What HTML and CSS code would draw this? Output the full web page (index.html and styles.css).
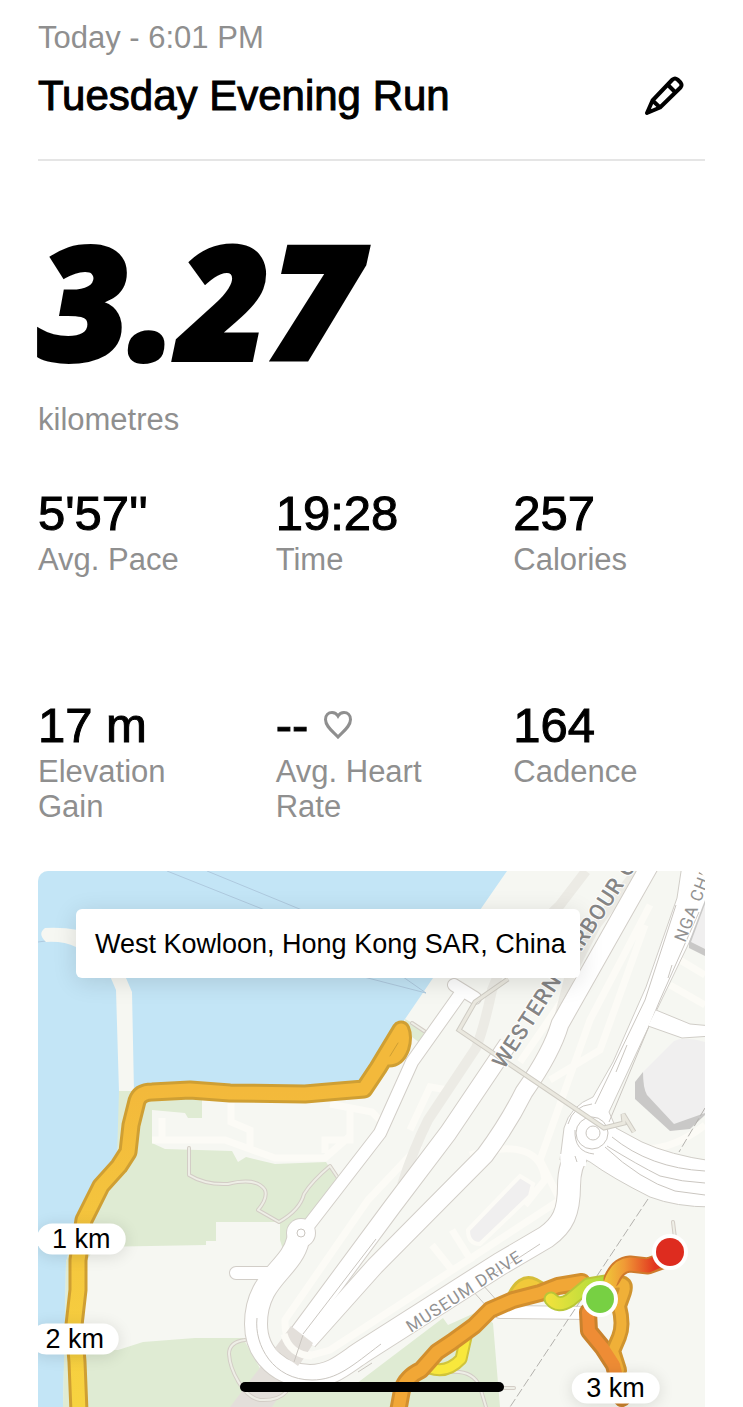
FILE: index.html
```html
<!DOCTYPE html>
<html lang="en">
<head>
    <meta charset="UTF-8">
    <meta name="viewport" content="width=device-width, initial-scale=1">
    <title>Tuesday Evening Run</title>
    <link rel="stylesheet" href="styles.css">
</head>
<body>
    <main class="run">
        <header class="run-header">
            <p class="date">Today - 6:01 PM</p>
            <div class="title-row">
                <h1>Tuesday Evening Run</h1>
                <button class="edit" type="button" aria-label="Edit name">
                    <svg viewBox="0 0 40 40" width="40" height="40">
                        <path d="M3 37 L8.500 24.500 L28.500 3.500 Q31 1.500 33.500 3.500 L36.500 6.500 Q38.500 9 36.500 11.500 L16 31.500 Z"/>
                        <path d="M23.500 8.500 L31.500 16.500 M8.500 24.500 L16 31.500 M5 33.500 L7 35.500"/>
                    </svg>
                </button>
            </div>
        </header>

        <section class="distance">
            <div class="distance-value">3.27</div>
            <div class="label">kilometres</div>
        </section>

        <section class="stats">
            <div class="stat">
                <div class="value">5'57''</div>
                <div class="label">Avg. Pace</div>
            </div>
            <div class="stat">
                <div class="value">19:28</div>
                <div class="label">Time</div>
            </div>
            <div class="stat">
                <div class="value">257</div>
                <div class="label">Calories</div>
            </div>
            <div class="stat">
                <div class="value">17 m</div>
                <div class="label">Elevation Gain</div>
            </div>
            <div class="stat">
                <div class="value">--
                    <svg class="heart" viewBox="0 0 28 28" width="28" height="28">
                        <path d="M14 26 C9 20.500 1.500 15.500 1.500 8.500 C1.500 4 4.500 1.500 8 1.500 C10.500 1.500 12.500 2.500 14 5 C15.500 2.500 17.500 1.500 20 1.500 C23.500 1.500 26.500 4 26.500 8.500 C26.500 15.500 19 20.500 14 26 Z"/>
                    </svg>
                </div>
                <div class="label">Avg. Heart Rate</div>
            </div>
            <div class="stat">
                <div class="value">164</div>
                <div class="label">Cadence</div>
            </div>
        </section>

        <section class="map">
            <svg class="map-canvas" viewBox="38 871 667 536">
                <defs>
                    <linearGradient id="west" gradientUnits="userSpaceOnUse" x1="0" y1="1090" x2="0" y2="1407">
                        <stop offset="0" stop-color="#f3b93b"/>
                        <stop offset="0.3" stop-color="#f4c23d"/>
                        <stop offset="1" stop-color="#f7d340"/>
                    </linearGradient>
                    <linearGradient id="finish" gradientUnits="userSpaceOnUse" x1="604" y1="0" x2="655" y2="0">
                        <stop offset="0" stop-color="#efc83a"/>
                        <stop offset="0.4" stop-color="#f09a36"/>
                        <stop offset="1" stop-color="#e2361f"/>
                    </linearGradient>
                    <linearGradient id="start" gradientUnits="userSpaceOnUse" x1="545" y1="0" x2="610" y2="0">
                        <stop offset="0" stop-color="#f4e23c"/>
                        <stop offset="1" stop-color="#a5dc3c"/>
                    </linearGradient>

                    <g id="loop-road">
                        <path d="M298 1240 C291 1270 256 1278 256 1324 C256 1356 282 1376 310 1376 C332 1376 344 1364 362 1352 L500 1264 L546 1237 C563 1225 569 1212 569 1186 Q569 1164 580 1150"/>
                    </g>
                    <g id="main-roads">
                        <path d="M298 1334 L392 1207 L448 1133 L508 1044"/>
                        <path d="M308 1341 L375 1266 L485 1155 Q508 1124 524 1092 Q552 1052 560 1024 L650 865"/>
                    </g>
                    <g id="small-roads">
                        <path d="M454 985 L475 998 M461 993 L412 1062 L380 1133 L305 1230 M236 1273 L276 1273"/>
                        <path d="M500 1312 L590 1313"/>
                    </g>
                    <g id="paths">
                        <path d="M189 1148 L189 1175 Q205 1185 228 1184 Q257 1177 265 1190 Q268 1198 258 1210 L279 1222 Q300 1210 304 1194 Q312 1181 330 1166 L338 1178"/>
                        <path d="M245 1340 Q229 1342 229 1354 C230 1370 243 1397 260 1400 Q278 1401 286 1392"/>
                        <path d="M450 1372 Q473 1370 480 1387 L486 1407"/>
                        <path d="M412 1023 L424 1031 M673 1222 L675 1238 M504 1388 L514 1388"/>
                    </g>
                    <g id="walkway">
                        <path d="M508 979 L475 1002 L459 1030 L604 1128 L624 1123 L623 1114 L634 1132"/>
                    </g>
                </defs>

                <rect class="land" x="38" y="871" width="667" height="536"/>

                <!-- harbour -->
                <path class="water" d="M38 871 H507 L480 910 L433 978 L403 1022 L363 1092 L145 1092 L119 1092 L119 1135 L117 1158 L94 1188 L78 1220 L66 1262 L65 1330 L63 1407 H38 Z"/>
                <path class="ferry" d="M167 871 L300 924 M207 871 L302 910 M38 942 L76 937 M360 976 L426 993 L396 972"/>
                <path class="land" d="M45 928 Q62 927 78 930 Q112 938 126 978 L132 992 L134 1092 H119 L116 990 L110 976 Q96 948 76 947 Q64 941 46 942 Q37 934 45 928 Z"/>

                <!-- parks -->
                <path class="park" d="M119 1091 L202 1091 V1118 H188 L185 1113 L152 1110 V1143 L165 1149 L232 1151 L238 1162 L246 1157 L275 1164 L326 1162 L338 1181 L313 1217 L290 1223 L284 1253 L280 1240 V1222 H216 V1241 H206 V1245 L95 1247 L86 1262 L83 1350 L118 1350 L143 1342 L195 1338 H243 L262 1372 L300 1390 H348 L443 1318 L448 1325 L477 1312 L493 1323 L500 1407 H63 L66 1262 L78 1220 L117 1158 Z"/>
                <path class="park" d="M405 1019 L426 1030 L420 1043 L408 1034 Z"/>

                <!-- blocks and lanes without a name -->
                <path class="lane" d="M162 1118 V1143 M152 1140 H225 L275 1158 L325 1158 L350 1136 M231 1103 V1122 L250 1130 V1150 M325 1153 V1140 H350 V1110 M330 1104 L372 1112 L380 1120"/>
                <path class="lane" d="M420 1145 L368 1200 L285 1320 Q284 1352 312 1355 L330 1350 L560 1200 L540 1160 L590 1020 L650 905 M550 1080 L600 1050 L645 925 M520 1062 L590 960 M410 1130 L430 1087 L448 1090"/>
                <path class="lane" d="M432 1245 L452 1270 M452 1230 L472 1262 M470 1155 Q540 1135 545 1180 L525 1205 M670 985 L705 1005 M680 960 L705 975 M640 1148 Q670 1152 705 1125"/>
                <path class="block" d="M468 1230 L520 1176 L533 1184 L530 1196 L480 1244 Q468 1244 468 1230 Z"/>
                <path class="band" d="M402 1185 Q413 1150 428 1120 L476 1048 Q484 1028 492 990 L505 958 L560 905 L586 871"/>
                <path class="band" d="M556 1030 L570 975 L596 925 L637 871"/>

                <!-- tunnel mouth -->
                <path class="tunnel" d="M290 1328 L313 1344 L272 1407 H230 Z"/>

                <use class="path-edge" href="#paths"/>
                <use class="path-fill" href="#paths"/>

                <use class="edge edge-s" href="#small-roads"/>
                <circle class="circle-edge" cx="301" cy="1233" r="15"/>
                <use class="edge edge-l" href="#loop-road"/>
                <use class="fill fill-s" href="#small-roads"/>
                <circle class="circle-fill" cx="301" cy="1233" r="14"/>
                <use class="fill fill-l" href="#loop-road"/>
                <circle class="ring" cx="301" cy="1233" r="4"/>
                <path class="line" d="M257 1318 C254 1345 273 1380 312 1380 C337 1380 352 1366 381 1344 M488 1278 L540 1244 M358 1372 L372 1363"/>
                <use class="edge edge-m" href="#main-roads"/>
                <use class="fill fill-m" href="#main-roads"/>
                <path class="tunnel" d="M291 1326 L313 1343 L298 1366 L275 1349 Z"/>
                <path class="lane" d="M284 1334 Q290 1355 312 1356"/>
                <path class="line" d="M303 1334 L376 1239 M303 1335 L294 1362"/>

                <!-- east roads -->
                <path class="road" d="M682 865 L677 898 L646 987 L613 1062 L593 1097 Q570 1106 564 1128 L560 1160 H586 L590 1162 Q612 1178 650 1197 Q676 1207 712 1207 L712 1161 Q670 1155 642 1142 L616 1128 L609 1112 L650 1024 L712 895 V865 Z"/>
                <path class="joint" d="M560 1154 H586 V1166 H561 Z"/>
                <path class="line" d="M676 905 L645 1000 L595 1104 M627 1045 L616 1072 M699 912 L660 1000 L609 1122 M672 965 L668 978"/>
                <path class="line" d="M568 1124 Q573 1106 592 1104 M575 1130 Q574 1152 594 1154 M575 1156 L577 1162"/>
                <path class="line" d="M607 1146 Q638 1165 660 1176 Q682 1182 705 1183 M605 1147 Q640 1180 675 1191 L705 1195 M612 1137 Q650 1168 705 1171"/>
                <path class="road" d="M656 1010 L690 1024 L712 1026 V1036 L682 1038 L648 1026"/>
                <circle class="ring" cx="592" cy="1133" r="16"/>
                <circle class="ring" cx="593" cy="1133" r="7"/>
                <use class="walk-edge" href="#walkway"/>
                <use class="walk-fill" href="#walkway"/>

                <!-- buildings -->
                <path class="wall" d="M643 1072 L635 1082 V1099 L670 1131 L690 1129 L705 1115 V1080 Z"/>
                <path class="roof" d="M643 1072 L674 1041 Q684 1036 705 1042 V1113 L674 1124 L647 1095 Q643 1088 643 1072 Z"/>
                <path class="wall" d="M705 900 L689 942 V948 L705 956 Z"/>
                <path class="roof" d="M705 904 L691 942 L705 949 Z"/>

                <path class="rail" d="M648 1199 L510 1407 M705 1108 L679 1152"/>

                <path class="line" d="M472 1290 L488 1308 M482 1284 L500 1304"/>
                <text class="road-name road-name-big" transform="translate(504 1070) rotate(-57)">WESTERN HARBOUR C</text>
                <text class="road-name" transform="translate(685 943) rotate(-69)">NGA CHE</text>
                <text class="road-name" transform="translate(411 1333) rotate(-33)">MUSEUM DRIVE</text>

                <!-- route, outline first then the pace colour -->
                <g class="route">
                    <path stroke="#cf9f33" stroke-width="19" d="M79 1412 L77 1362 L74 1325 L78 1290 L78 1260 L84 1220 L101 1186 L119 1166 L128 1152 L131 1125 L137 1101 Q140 1092 152 1092 L190 1090 L230 1093 L305 1094 L340 1091 L364 1089 L378 1068 L401 1030 Q404 1037 401 1047 Q397 1058 389 1058"/>
                    <path stroke="url(#west)" stroke-width="13" d="M79 1412 L77 1362 L74 1325 L78 1290 L78 1260 L84 1220 L101 1186 L119 1166 L128 1152 L131 1125 L137 1101 Q140 1092 152 1092 L190 1090 L230 1093 L305 1094 L340 1091 L364 1089 L378 1068 L401 1030 Q404 1037 401 1047 Q397 1058 389 1058"/>
                    <path stroke="#cf9f33" stroke-width="1" d="M390 1056 L398 1043"/>

                    <path stroke="#d0c43a" stroke-width="13" d="M430 1368 Q447 1374 461 1359 L466 1337"/>
                    <path stroke="#f8e83c" stroke-width="9" d="M430 1368 Q447 1374 461 1359 L466 1337"/>
                    <path stroke="#d5bd38" stroke-width="15" d="M513 1299 Q522 1279 534 1285 L548 1293"/>
                    <path stroke="#f1c93a" stroke-width="9" d="M513 1299 Q522 1279 534 1285 L548 1293"/>

                    <path stroke="#c9822d" stroke-width="18" d="M588 1312 L589 1331 L603 1348 L614 1365 L622 1398"/>
                    <path stroke="#d0942f" stroke-width="16" d="M610 1284 Q628 1279 624 1292 L619 1306 Q624 1325 619 1337 L613 1351 L619 1370"/>
                    <path stroke="#f0b038" stroke-width="10" d="M610 1284 Q628 1279 624 1292 L619 1306 Q624 1325 619 1337 L613 1351 L619 1370"/>
                    <path stroke="#ee8c35" stroke-width="12" d="M588 1312 L589 1331 L603 1348 L614 1365 L622 1398"/>

                    <path stroke="#d28f2e" stroke-width="18" d="M398 1412 L402 1390 Q406 1377 421 1370 L437 1352 L452 1342 L474 1326 L490 1310 L513 1300 L540 1293 L558 1286 L582 1282"/>
                    <path stroke="#f1a736" stroke-width="12" d="M398 1412 L402 1390 Q406 1377 421 1370 L437 1352 L452 1342 L474 1326 L490 1310 L513 1300 L540 1293 L558 1286 L582 1282"/>

                    <path stroke="#b9c638" stroke-width="15" d="M551 1299 Q558 1308 570 1300 L588 1285 L606 1282"/>
                    <path stroke="url(#start)" stroke-width="11" d="M551 1299 Q558 1308 570 1300 L588 1285 L606 1282"/>
                    <path stroke="#cf7a2c" stroke-width="17" d="M612 1279 Q618 1265 630 1264 L648 1266 L662 1261"/>
                    <path stroke="url(#finish)" stroke-width="13" d="M610 1284 Q616 1265 630 1264 L648 1266 L662 1260"/>
                </g>
                <circle class="marker-ring" cx="600" cy="1299" r="18"/>
                <circle class="marker-start" cx="600" cy="1299" r="14"/>
                <circle class="marker-ring" cx="670" cy="1252" r="18"/>
                <circle class="marker-end" cx="670" cy="1252" r="14"/>
            </svg>

            <div class="place">West Kowloon, Hong Kong SAR, China</div>
            <span class="km km-1">1 km</span>
            <span class="km km-2">2 km</span>
            <span class="km km-3">3 km</span>
        </section>
    </main>

    <div class="home-bar"></div>
</body>
</html>
```

FILE: styles.css
```css
* {
    box-sizing: border-box;
}
body {
    margin: 0;
    background-color: #fff;
    color: #000;
    font-family: "Liberation Sans", Arial, sans-serif;
}
.run {
    padding: 20px 38px 0;
}
.run-header {
    padding-bottom: 38px;
    border-bottom: 2px solid #e5e5e5;
}
.date {
    margin: 0 0 15px;
    color: #8f8f8f;
    font-size: 31px;
    line-height: 36px;
}
.title-row {
    display: flex;
    align-items: center;
    justify-content: space-between;
    padding-right: 21px;
}
h1 {
    margin: 0;
    font-size: 42px;
    font-weight: 400;
    line-height: 50px;
    -webkit-text-stroke: 1px #000;
}
.edit {
    height: 40px;
    padding: 0;
    border: 0;
    background: none;
    cursor: pointer;
}
.edit svg {
    display: block;
    fill: none;
    stroke: #000;
    stroke-width: 4;
    stroke-linejoin: round;
}
.distance {
    padding-top: 78px;
}
.distance-value {
    margin-bottom: 43px;
    font-family: "Open Sans", "Liberation Sans", sans-serif;
    font-size: 158px;
    font-style: italic;
    font-weight: 800;
    line-height: 120px;
    -webkit-text-stroke: 4px #000;
}
.label {
    color: #8f8f8f;
    font-size: 31px;
    line-height: 35px;
}
.stats {
    display: grid;
    grid-template-columns: repeat(3, 1fr);
    gap: 121px 46px;
    margin: 49px 0 47px;
}
.value {
    display: flex;
    align-items: center;
    gap: 16px;
    margin-bottom: 2px;
    font-size: 49px;
    line-height: 54px;
    font-kerning: none;
    -webkit-text-stroke: 1px #000;
}
.heart {
    fill: none;
    stroke: #8f8f8f;
    stroke-width: 3;
}
.map {
    position: relative;
    overflow: hidden;
    border-radius: 10px 10px 0 0;
}
.map-canvas {
    display: block;
    width: 100%;
    fill: none;
}
.place {
    position: absolute;
    top: 38px;
    left: 38px;
    padding: 1px 14px 0 19px;
    border-radius: 6px;
    background-color: #fff;
    box-shadow: 0 4px 24px rgba(0, 0, 0, 0.12);
    font-size: 27px;
    line-height: 68px;
    white-space: nowrap;
}
.km {
    position: absolute;
    padding: 0 15px;
    border-radius: 16px;
    background-color: #fff;
    box-shadow: 0 2px 16px rgba(0, 0, 0, 0.12);
    font-size: 27px;
    line-height: 31px;
    white-space: nowrap;
    transform: translate(-50%, -50%);
}
.km-1 {
    left: 6.5%;
    top: 68.6%;
}
.km-2 {
    left: 5.5%;
    top: 87.3%;
}
.km-3 {
    left: 86.6%;
    top: 96.5%;
}
.home-bar {
    position: fixed;
    bottom: 15px;
    left: 50%;
    width: 264px;
    height: 10px;
    border-radius: 5px;
    background-color: #000;
    transform: translateX(-50%);
}

/* map */
.land {
    fill: #f6f7f2;
}
.water {
    fill: #c3e5f6;
}
.park {
    fill: #dfebd3;
}
.ferry {
    stroke: #aec9de;
    stroke-width: 1;
}
.lane {
    stroke: #fcfbf6;
    stroke-width: 7;
}
.block {
    fill: #f0efef;
    stroke: #fcfbf6;
    stroke-width: 4;
}
.band {
    stroke: #ecebe5;
    stroke-width: 10;
}
.tunnel {
    fill: #e3dfda;
}
.edge, .fill, .path-edge, .path-fill {
    stroke-linecap: round;
    stroke-linejoin: round;
}
.edge {
    stroke: #d2cec8;
}
.fill {
    stroke: #fff;
}
.edge-l {
    stroke-width: 24;
}
.fill-l {
    stroke-width: 22;
}
.edge-m {
    stroke-width: 19;
    stroke-linecap: butt;
}
.fill-m {
    stroke-width: 17;
    stroke-linecap: butt;
}
.edge-s {
    stroke-width: 14;
}
.fill-s {
    stroke-width: 12;
}
.circle-edge {
    fill: #d2cec8;
}
.circle-fill, .joint {
    fill: #fff;
}
.path-edge {
    stroke: #d3cdc6;
    stroke-width: 4;
}
.path-fill {
    stroke: #eeeee6;
    stroke-width: 2;
}
.road {
    fill: #fff;
    stroke: #d0cdc7;
    stroke-width: 1;
}
.line, .ring {
    stroke: #cac6c0;
    stroke-width: 1;
}
.walk-edge {
    stroke: #cfccc4;
    stroke-width: 5;
}
.walk-fill {
    stroke: #eae8df;
    stroke-width: 3;
}
.wall {
    fill: #c9c8c7;
}
.roof {
    fill: #f0efef;
}
.rail {
    stroke: #b4b2ae;
    stroke-width: 1;
    stroke-dasharray: 9 3;
}
.road-name {
    fill: #929292;
    stroke: #fff;
    stroke-width: 2;
    paint-order: stroke;
    font-family: Roboto, "Liberation Sans", sans-serif;
    font-size: 17px;
    letter-spacing: 1px;
}
.road-name-big {
    fill: #858585;
    font-size: 22px;
    font-weight: 500;
}
.route path {
    stroke-linecap: round;
    stroke-linejoin: round;
}
.marker-ring {
    fill: #fff;
}
.marker-start {
    fill: #77d043;
}
.marker-end {
    fill: #de2c1f;
}
```
